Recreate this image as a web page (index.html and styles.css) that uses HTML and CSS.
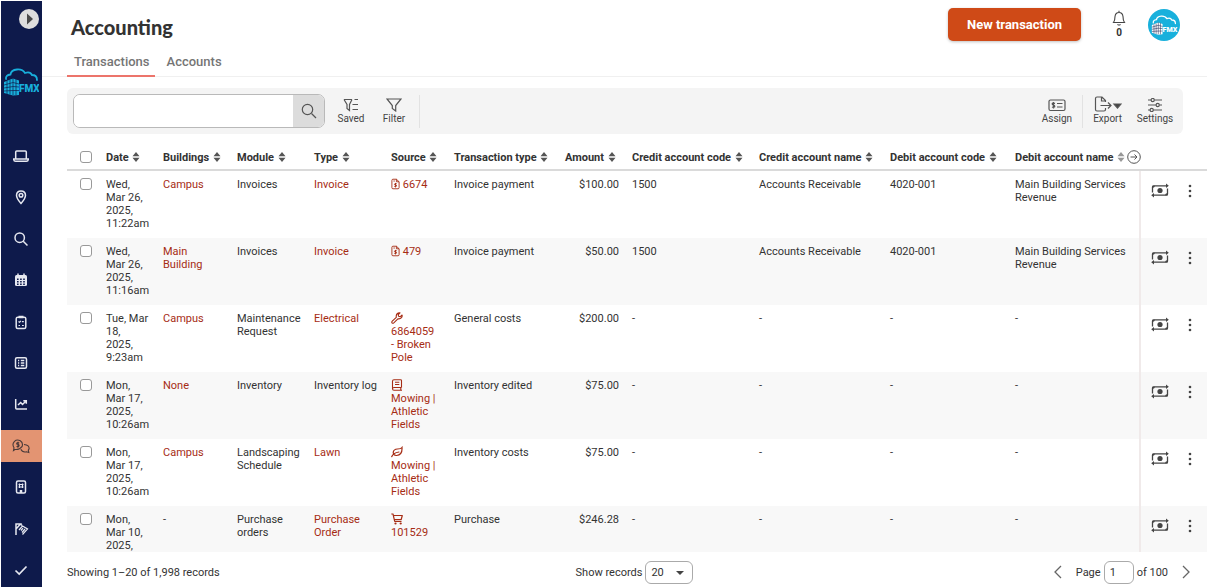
FILE: index.html
```
<!DOCTYPE html>
<html lang="en">
  <head>
    <meta charset="UTF-8" />
    <meta name="viewport" content="width=device-width, initial-scale=1.0" />
    <title>Accounting</title>
    <link rel="stylesheet" href="styles.css">
  </head>
  <body>
    <svg class="sprite" aria-hidden="true">
      <symbol id="logo" viewBox="0 0 36 28">
        <path d="M3 11 Q2.500 7 7.500 6.500 Q8 2 14 1.500 Q19.500 1 22 5 Q27 3 29 7 Q34 7 34 12" fill="none" stroke="currentColor" stroke-width="1.800" stroke-linecap="round" />
        <path d="M1 14 L10 10.500 L16 12.500 V27 L10 27.500 L1 25 Z" fill="currentColor" />
        <path class="logo-gap" d="M1 17 L10 14.500 L16 16 M1 20 L10 18.500 L16 19 M1 23 L10 22.500 H16 M4 13 V26 M7 12 V26.500 M10 10 V27 M13 11 V27" fill="none" stroke-width="0.700" />
      </symbol>
      <symbol id="sort" viewBox="0 0 8 10">
        <path d="M4 0 L7.500 4.200 H0.500 Z M4 10 L7.500 5.800 H0.500 Z" fill="currentColor" />
      </symbol>
      <symbol id="invoice" viewBox="0 0 10 12">
        <path d="M1 2 Q1 0.700 2.200 0.700 H6 L9 3.500 V10 Q9 11.300 7.800 11.300 H2.200 Q1 11.300 1 10 Z M6 0.700 V3.500 H9 M6.400 5.700 Q3.600 5 3.800 6.600 Q6.500 7 6.300 8.300 Q5.500 9.300 3.600 8.600 M5 4.800 V9.800 M2.700 2.700 H4.300" fill="none" stroke="currentColor" stroke-width="1" />
      </symbol>
      <symbol id="wrench" viewBox="0 0 12 12">
        <path d="M8.500 0.900 Q5.500 0.900 5.200 4 L5.300 5.300 L1 9.400 Q0.500 10.400 1.200 11 Q2 11.600 2.800 10.900 L6.900 6.800 Q9 7.300 10.500 5.700 Q11.400 4.500 11.100 3 L9.300 4.600 L7.500 4.300 L7.300 2.600 L9 0.900 Z" fill="none" stroke="currentColor" stroke-width="1.100" stroke-linejoin="round" />
      </symbol>
      <symbol id="book" viewBox="0 0 11 12">
        <path d="M10 8.500 V1.600 Q10 0.700 9 0.700 H2.500 Q1 0.700 1 2.300 V9.800 Q1 11.300 2.500 11.300 H10.500 M10 8.500 H2.500 Q1 8.500 1 9.900 M9.300 8.500 V11.300 M3.500 3.300 H7.800 M3.500 5.500 H7.800" fill="none" stroke="currentColor" stroke-width="1.100" />
      </symbol>
      <symbol id="leaf" viewBox="0 0 12 12">
        <path d="M11 1.500 Q10 3 6.500 3 Q2.500 3.200 2.200 6.500 Q2.500 9.700 5.600 9.500 Q11.500 9 11 1.500 Z M0.700 10.700 Q2 7 8 6" fill="none" stroke="currentColor" stroke-width="1.200" stroke-linecap="round" />
      </symbol>
      <symbol id="cart" viewBox="0 0 12 12">
        <path d="M0.300 1 H2 L3.700 8.300 H10.500 M2.400 2.500 H11.300 L10.200 6.500 H3.300" fill="none" stroke="currentColor" stroke-width="1.200" stroke-linejoin="round" />
        <circle cx="4.500" cy="10.500" r="1.100" fill="currentColor" />
        <circle cx="9.700" cy="10.500" r="1.100" fill="currentColor" />
      </symbol>
      <symbol id="money" viewBox="0 0 18 15">
        <path d="M1.500 9.500 V4 Q1.500 2.800 2.700 2.800 H15.500 M16.500 5.500 V11 Q16.500 12.200 15.300 12.200 H2.500" fill="none" stroke="currentColor" stroke-width="1.300" />
        <path d="M15 0.500 L17.800 2.800 L15 5.100 Z M3 9.900 L0.200 12.200 L3 14.500 Z" fill="currentColor" />
        <path d="M1.500 2.800 H4 Q3.800 4.800 1.500 5 Z M16.500 12.200 H14 Q14.200 10.200 16.500 10 Z" fill="currentColor" />
        <circle cx="9" cy="7.500" r="2.600" fill="currentColor" />
      </symbol>
      <symbol id="dots" viewBox="0 0 4 14">
        <circle cx="2" cy="2" r="1.300" /><circle cx="2" cy="7" r="1.300" /><circle cx="2" cy="12" r="1.300" />
      </symbol>
    </svg>

    <aside class="sidebar">
      <button class="expand" aria-label="Expand menu">
        <svg viewBox="0 0 20 20" width="20" height="20"><circle cx="10" cy="10" r="10" fill="#dedede" /><path d="M8 4.500 L14 10 L8 15.500 Z" fill="#4a4a4a" /></svg>
      </button>
      <a class="brand" href="#" aria-label="FMX home"><svg viewBox="0 0 36 28" width="36" height="28"><use href="#logo" /><text class="logo-text" x="16" y="24">FMX</text></svg></a>
      <nav class="menu">
        <a href="#" aria-label="Dashboard"><svg viewBox="0 0 16 16"><path d="M2.700 10.500 V4 Q2.700 3 3.700 3 H12.300 Q13.300 3 13.300 4 V10.500 M0.700 11 H15.300 Q15.300 13.300 13.500 13.300 H2.500 Q0.700 13.300 0.700 11 Z" /></svg></a>
        <a href="#" aria-label="Map"><svg viewBox="0 0 16 16"><path d="M8 14.500 Q3.500 9.500 3.500 6.300 Q3.700 2 8 2 Q12.300 2 12.500 6.300 Q12.500 9.500 8 14.500 Z" /><circle cx="8" cy="6.300" r="1.800" /></svg></a>
        <a href="#" aria-label="Search"><svg viewBox="0 0 16 16"><circle cx="6.700" cy="6.700" r="4.700" /><path d="M10.200 10.200 L14.500 14.500" /></svg></a>
        <a href="#" aria-label="Calendar"><svg viewBox="0 0 16 16"><path d="M2 4.500 Q2 3 3.500 3 H12.500 Q14 3 14 4.500 V12.500 Q14 14 12.500 14 H3.500 Q2 14 2 12.500 Z" fill="currentColor" stroke="none" /><path d="M5 1.500 V4 M11 1.500 V4" /><path class="cut" d="M4 7.300 H12 M4 9.800 H12 M4 12.200 H12" stroke-dasharray="1.600 1.500" /></svg></a>
        <a href="#" aria-label="Requests"><svg viewBox="0 0 16 16"><rect x="3.200" y="3.200" width="9.600" height="11.300" rx="1.500" /><path d="M5.500 3 H10.500" stroke-width="2.500" /><path d="M5.500 7.500 L6.500 8.300 L8 6.800 M9 7.700 H10.800 M5.500 11.500 H7 M9 11.500 H10.800" stroke-width="1.200" /></svg></a>
        <a href="#" aria-label="Lists"><svg viewBox="0 0 16 16"><rect x="2.500" y="2.700" width="11" height="10.600" rx="1.500" /><path d="M5 5.500 H6.200 M7.800 5.500 H11.300 M5 8 H6.200 M7.800 8 H11.300 M5 10.500 H6.200 M7.800 10.500 H11.300" /></svg></a>
        <a href="#" aria-label="Reports"><svg viewBox="0 0 16 16"><path d="M2.700 3 V12 Q2.700 13 3.700 13 H14 M5 9 L7.700 6.500 L9.500 8.500 L13 5 M10.300 4.700 H13.300 V7.700" /></svg></a>
        <a class="active" href="#" aria-label="Accounting"><svg class="wide" viewBox="0 0 18 16"><path d="M3 11.500 L1.500 12.500 L2 9.800 Q-0.300 6 2.500 3.300 Q5 1 8.300 2.800 Q11.500 5 10 8.700 Q7.500 12 3 11.500 Z M12 6.500 Q17.700 7 17 11 L16.300 12.200 L16.800 14.500 L14.500 13.800 Q10.500 14.800 8.800 11.300 M7.300 5 Q4.500 4 4.700 6 Q7.500 6.500 7 8 Q6.500 9 4.500 8.500 M6 3.700 V9.800" /></svg></a>
        <a href="#" aria-label="Buildings"><svg viewBox="0 0 16 16"><rect x="3.500" y="2" width="9" height="12" rx="1.500" /><path d="M6.500 4.500 V9 M9.500 4.500 V9 M5.500 5.500 H10.500 M5.500 8 H10.500" stroke-width="1.200" /><path d="M8 11 V14" stroke-width="2.500" /></svg></a>
        <a href="#" aria-label="Planning"><svg viewBox="0 0 16 16"><path d="M3 14 V3 H7.500 L3 8 M7.500 3 L9 4.500" /><path d="M6 9 L9.500 5 L14.500 8 L9.500 13.500 M8 9.500 L10 7.200 M9 11.500 L12 8" stroke-width="1.200" /></svg></a>
        <a href="#" aria-label="Tasks"><svg viewBox="0 0 16 16"><path d="M2.500 8.500 L6.200 12 L13.500 4.500" stroke-width="1.700" /></svg></a>
      </nav>
    </aside>

    <main class="main">
      <header class="header">
        <h1>Accounting</h1>
        <button class="new-button">New transaction</button>
        <button class="alerts" aria-label="Notifications">
          <svg viewBox="0 0 14 16" width="14" height="16"><path d="M1.500 12.500 Q3 10.500 3 6.500 Q3.500 2.500 7 2.500 Q10.500 2.500 11 6.500 Q11 10.500 12.500 12.500 Z M7 2.500 V0.700 M5.500 14.300 Q7 15.700 8.500 14.300" fill="none" stroke="#444" stroke-width="1.100" /></svg>
          <span>0</span>
        </button>
        <a class="avatar" href="#" aria-label="Profile"><svg viewBox="0 0 36 28" width="26" height="20"><use href="#logo" /><text class="logo-text" x="16" y="24">FMX</text></svg></a>
      </header>

      <nav class="tabs">
        <a class="selected" href="#">Transactions</a>
        <a href="#">Accounts</a>
      </nav>

      <section class="toolbar">
        <form class="search">
          <input type="search" aria-label="Search transactions">
          <button type="button" aria-label="Search">
            <svg viewBox="0 0 16 16" width="16" height="16"><circle cx="6.500" cy="6.500" r="5.200" /><path d="M10.500 10.500 L15 15" /></svg>
          </button>
        </form>
        <button class="tool tool-saved">
          <svg viewBox="0 0 16 14" width="16" height="14"><path d="M1 1.500 H9 M1 1.500 L4 6.500 V10.500 L6.500 12.500 V6.500 L9 1.500 M11.500 1.500 H15 M9.500 6.500 H15 M9.500 11.500 H15" /></svg>
          Saved
        </button>
        <button class="tool tool-filter">
          <svg viewBox="0 0 16 14" width="16" height="14"><path d="M1 1 H15 L9.700 7.500 V13 L6.300 10.500 V7.500 Z" /></svg>
          Filter
        </button>
        <span class="divider"></span>
        <div class="tools-right">
          <button class="tool">
            <svg viewBox="0 0 18 14" width="18" height="14"><rect x="1" y="2" width="16" height="10.500" rx="1.500" /><path d="M7 5.300 Q4 4.600 4.200 6 Q4.500 7 5.600 7.200 Q7 7.500 6.700 8.800 Q5.500 9.700 4 9 M5.500 4 V10.500 M9 5.500 H14.500 M9 9 H14.500" /></svg>
            Assign
          </button>
          <span class="divider"></span>
          <button class="tool">
            <svg viewBox="0 0 28 16" width="28" height="16"><path d="M11.500 6 V4.500 L8 1 H3 Q1.500 1 1.500 2.500 V13.500 Q1.500 15 3 15 H10 Q11.500 15 11.500 13.500 V12 M7.500 1 V5 H11.500 M6.500 9.500 H16.500 M14 6.500 L17 9.500 L14 12.500" /><path d="M20 8 H27 L23.500 12 Z" fill="#444" /></svg>
            Export
          </button>
          <button class="tool">
            <svg viewBox="0 0 16 14" width="16" height="14"><path d="M1 2 H4 M7.500 2 H15 M1 7 H9 M12.500 7 H15 M1 12 H3 M6.500 12 H15" /><circle cx="5.700" cy="2" r="1.600" /><circle cx="10.700" cy="7" r="1.600" /><circle cx="4.700" cy="12" r="1.600" /></svg>
            Settings
          </button>
        </div>
      </section>

      <div class="table-wrap">
        <table>
          <colgroup>
            <col class="c-check"><col class="c-date"><col class="c-building"><col class="c-module"><col class="c-type"><col class="c-source"><col class="c-kind"><col class="c-amount"><col class="c-credit-code"><col class="c-credit-name"><col class="c-debit-code"><col class="c-debit-name"><col class="c-actions">
          </colgroup>
          <thead>
            <tr>
              <th class="check"><input type="checkbox" aria-label="Select all"></th>
              <th>Date <svg class="sort"><use href="#sort" /></svg></th>
              <th>Buildings <svg class="sort"><use href="#sort" /></svg></th>
              <th>Module <svg class="sort"><use href="#sort" /></svg></th>
              <th>Type <svg class="sort"><use href="#sort" /></svg></th>
              <th>Source <svg class="sort"><use href="#sort" /></svg></th>
              <th>Transaction type <svg class="sort"><use href="#sort" /></svg></th>
              <th>Amount <svg class="sort"><use href="#sort" /></svg></th>
              <th>Credit account code <svg class="sort"><use href="#sort" /></svg></th>
              <th>Credit account name <svg class="sort"><use href="#sort" /></svg></th>
              <th>Debit account code <svg class="sort"><use href="#sort" /></svg></th>
              <th>Debit account name <svg class="sort faded"><use href="#sort" /></svg></th>
              <th class="scroll-cell"><button class="scroll-right" aria-label="Scroll right"><svg viewBox="0 0 14 14" width="14" height="14"><circle cx="7" cy="7" r="6.300" /><path d="M3.500 7 H10 M7.500 4.500 L10 7 L7.500 9.500" /></svg></button></th>
            </tr>
          </thead>
          <tbody>
            <tr>
              <td class="check"><input type="checkbox" aria-label="Select row"></td>
              <td>Wed, Mar 26, 2025, 11:22am</td>
              <td><a href="#">Campus</a></td>
              <td>Invoices</td>
              <td><a href="#">Invoice</a></td>
              <td><a href="#"><svg class="icon slim"><use href="#invoice" /></svg> 6674</a></td>
              <td>Invoice payment</td>
              <td class="amount">$100.00</td>
              <td>1500</td>
              <td>Accounts Receivable</td>
              <td>4020-001</td>
              <td>Main Building Services Revenue</td>
              <td class="actions"><div><button aria-label="Transfer"><svg width="18" height="15"><use href="#money" /></svg></button><button aria-label="More"><svg width="4" height="14"><use href="#dots" /></svg></button></div></td>
            </tr>
            <tr>
              <td class="check"><input type="checkbox" aria-label="Select row"></td>
              <td>Wed, Mar 26, 2025, 11:16am</td>
              <td><a href="#">Main Building</a></td>
              <td>Invoices</td>
              <td><a href="#">Invoice</a></td>
              <td><a href="#"><svg class="icon slim"><use href="#invoice" /></svg> 479</a></td>
              <td>Invoice payment</td>
              <td class="amount">$50.00</td>
              <td>1500</td>
              <td>Accounts Receivable</td>
              <td>4020-001</td>
              <td>Main Building Services Revenue</td>
              <td class="actions"><div><button aria-label="Transfer"><svg width="18" height="15"><use href="#money" /></svg></button><button aria-label="More"><svg width="4" height="14"><use href="#dots" /></svg></button></div></td>
            </tr>
            <tr>
              <td class="check"><input type="checkbox" aria-label="Select row"></td>
              <td>Tue, Mar 18,<br>2025, 9:23am</td>
              <td><a href="#">Campus</a></td>
              <td>Maintenance Request</td>
              <td><a href="#">Electrical</a></td>
              <td><a href="#"><svg class="icon"><use href="#wrench" /></svg><br>6864059<br>- Broken Pole</a></td>
              <td>General costs</td>
              <td class="amount">$200.00</td>
              <td>-</td>
              <td>-</td>
              <td>-</td>
              <td>-</td>
              <td class="actions"><div><button aria-label="Transfer"><svg width="18" height="15"><use href="#money" /></svg></button><button aria-label="More"><svg width="4" height="14"><use href="#dots" /></svg></button></div></td>
            </tr>
            <tr>
              <td class="check"><input type="checkbox" aria-label="Select row"></td>
              <td>Mon, Mar&nbsp;17, 2025, 10:26am</td>
              <td><a href="#">None</a></td>
              <td>Inventory</td>
              <td>Inventory log</td>
              <td><a href="#"><svg class="icon"><use href="#book" /></svg><br>Mowing | Athletic Fields</a></td>
              <td>Inventory edited</td>
              <td class="amount">$75.00</td>
              <td>-</td>
              <td>-</td>
              <td>-</td>
              <td>-</td>
              <td class="actions"><div><button aria-label="Transfer"><svg width="18" height="15"><use href="#money" /></svg></button><button aria-label="More"><svg width="4" height="14"><use href="#dots" /></svg></button></div></td>
            </tr>
            <tr>
              <td class="check"><input type="checkbox" aria-label="Select row"></td>
              <td>Mon, Mar&nbsp;17, 2025, 10:26am</td>
              <td><a href="#">Campus</a></td>
              <td>Landscaping Schedule</td>
              <td><a href="#">Lawn</a></td>
              <td><a href="#"><svg class="icon"><use href="#leaf" /></svg><br>Mowing | Athletic Fields</a></td>
              <td>Inventory costs</td>
              <td class="amount">$75.00</td>
              <td>-</td>
              <td>-</td>
              <td>-</td>
              <td>-</td>
              <td class="actions"><div><button aria-label="Transfer"><svg width="18" height="15"><use href="#money" /></svg></button><button aria-label="More"><svg width="4" height="14"><use href="#dots" /></svg></button></div></td>
            </tr>
            <tr>
              <td class="check"><input type="checkbox" aria-label="Select row"></td>
              <td>Mon, Mar&nbsp;10, 2025,</td>
              <td>-</td>
              <td>Purchase orders</td>
              <td><a href="#">Purchase Order</a></td>
              <td><a href="#"><svg class="icon"><use href="#cart" /></svg><br>101529</a></td>
              <td>Purchase</td>
              <td class="amount">$246.28</td>
              <td>-</td>
              <td>-</td>
              <td>-</td>
              <td>-</td>
              <td class="actions"><div><button aria-label="Transfer"><svg width="18" height="15"><use href="#money" /></svg></button><button aria-label="More"><svg width="4" height="14"><use href="#dots" /></svg></button></div></td>
            </tr>
          </tbody>
        </table>
      </div>

      <footer class="footer">
        <p>Showing 1–20 of 1,998 records</p>
        <div class="page-size">
          <label for="size">Show records</label>
          <span class="select">
            <select id="size"><option>20</option><option>50</option><option>100</option></select>
          </span>
        </div>
        <div class="pager">
          <button aria-label="Previous page"><svg viewBox="0 0 8 14" width="8" height="14"><path d="M7 1 L1 7 L7 13" /></svg></button>
          <label for="page">Page</label>
          <input id="page" type="text" value="1">
          <span>of 100</span>
          <button class="next" aria-label="Next page"><svg viewBox="0 0 8 14" width="8" height="14"><path d="M1 1 L7 7 L1 13" /></svg></button>
        </div>
      </footer>
    </main>
  </body>
</html>
```

FILE: styles.css
```
* {
  margin: 0;
  padding: 0;
  box-sizing: border-box;
}

body {
  display: flex;
  height: 100vh;
  padding: 1px 1px 0 1px;
  overflow: hidden;
  background: #fff;
  color: #333;
  font-family: Roboto, sans-serif;
  font-size: 11px;
  line-height: 13px;
}

button {
  border: none;
  background: none;
  color: inherit;
  font: inherit;
  cursor: pointer;
}

a {
  color: #a62c14;
  text-decoration: none;
}

svg {
  display: block;
}

.sprite {
  position: absolute;
  width: 0;
  height: 0;
}

/* sidebar */
.sidebar {
  display: flex;
  flex-direction: column;
  flex: none;
  width: 41px;
  background: #0e1a4b;
}

.expand {
  align-self: flex-end;
  margin: 8px 3px 0 0;
}

.brand {
  margin: 39px 0 44px 2px;
  color: #18aedb;
}

.logo-gap {
  stroke: #0e1a4b;
}

.logo-text {
  fill: currentColor;
  font-size: 10px;
  font-weight: 900;
}

.menu {
  display: flex;
  flex: 1;
  flex-direction: column;
  justify-content: space-between;
  padding-bottom: 1px;
}

.menu a {
  display: flex;
  align-items: center;
  justify-content: center;
  height: 32px;
  padding-right: 2px;
  color: #e6e8f0;
}

.menu svg {
  width: 16px;
  height: 16px;
  fill: none;
  stroke: currentColor;
  stroke-width: 1.5;
}

.menu .cut {
  stroke: #0e1a4b;
}

.menu .active {
  background: #e39472;
  color: #4a3a3a;
}

.menu .wide {
  width: 18px;
  stroke-width: 1.1;
}

/* header */
.main {
  display: flex;
  flex: 1;
  flex-direction: column;
  min-width: 0;
}

.header {
  display: flex;
  align-items: center;
  height: 47px;
  padding: 0 27px 0 29px;
}

h1 {
  flex: 1;
  padding-top: 4px;
  color: #333;
  font-family: Lato, sans-serif;
  font-size: 20px;
  font-weight: 900;
  line-height: 24px;
}

.new-button {
  width: 133px;
  height: 33px;
  border-radius: 5px;
  background: #cf4a17;
  box-shadow: 0 1px 3px rgba(0, 0, 0, 0.25);
  color: #fff;
  font-size: 13px;
  font-weight: 700;
}

.alerts {
  display: flex;
  flex-direction: column;
  align-items: center;
  width: 14px;
  margin: 0 22px 0 31px;
  font-size: 10px;
  font-weight: 700;
}

.avatar {
  display: flex;
  align-items: center;
  justify-content: center;
  width: 32px;
  height: 32px;
  border-radius: 50%;
  background: #18b0dc;
  color: #fff;
}

.avatar svg {
  overflow: visible;
}

/* tabs */
.tabs {
  display: flex;
  height: 29px;
  padding-left: 25px;
  border-bottom: 1px solid #f0f0f0;
}

.tabs a {
  height: 29px;
  padding: 7px 5px 0 7px;
  color: #757575;
  font-size: 13px;
  font-weight: 500;
}

.tabs .selected {
  margin-right: 5px;
  border-bottom: 2px solid #ec746b;
}

/* toolbar */
.toolbar {
  display: flex;
  align-items: center;
  height: 46px;
  margin: 11px 24px 11px 25px;
  padding: 0 5px 0 6px;
  border-radius: 6px;
  background: #f4f4f4;
}

.search {
  display: flex;
  width: 252px;
  height: 34px;
  overflow: hidden;
  border: 1px solid #b9b9b9;
  border-radius: 7px;
  background: #fff;
}

.search input {
  flex: 1;
  min-width: 0;
  padding: 0 8px;
  border: none;
  outline: none;
  font: inherit;
}

.search button {
  display: flex;
  align-items: center;
  justify-content: center;
  width: 31px;
  background: #dcdcdc;
}

.search svg,
.tool svg {
  fill: none;
  stroke: #555;
  stroke-width: 1.2;
}

.tool {
  display: flex;
  flex-direction: column;
  align-items: center;
  justify-content: flex-end;
  height: 30px;
  color: #444;
  font-size: 10px;
  line-height: 14px;
}

.tool-saved {
  width: 28px;
  margin-left: 12px;
}

.tool-filter {
  width: 28px;
  margin: 0 11px 0 15px;
}

.divider {
  width: 1px;
  height: 33px;
  background: #e2e2e2;
}

.tools-right {
  display: flex;
  align-items: center;
  gap: 10px;
  margin-left: auto;
}

.tools-right .tool:last-child {
  width: 46px;
}

/* table */
.table-wrap {
  flex: 1;
  min-height: 0;
  margin-left: 25px;
  overflow: auto;
  scrollbar-width: none;
}

table {
  width: 100%;
  border-collapse: separate;
  border-spacing: 0;
  table-layout: fixed;
}

.c-check { width: 33px; }
.c-date { width: 57px; }
.c-building { width: 74px; }
.c-module { width: 77px; }
.c-type { width: 77px; }
.c-source { width: 63px; }
.c-kind { width: 111px; }
.c-amount { width: 67px; }
.c-credit-code { width: 127px; }
.c-credit-name { width: 131px; }
.c-debit-code { width: 125px; }
.c-debit-name { width: 130px; }
.c-actions { width: 68px; }

th {
  position: sticky;
  top: 0;
  height: 26px;
  padding: 0 0 0 6px;
  border-bottom: 2px solid #dadada;
  background: #fff;
  font-size: 11px;
  font-weight: 700;
  text-align: left;
  white-space: nowrap;
}

td {
  height: 67px;
  padding: 7px 6px 8px;
  vertical-align: top;
}

tbody tr:nth-child(even) td {
  background: #f8f8f8;
}

.check {
  padding-left: 13px;
}

.check input {
  display: block;
  width: 12px;
  height: 12px;
  border: 1px solid #999;
  border-radius: 3px;
  background: #fff;
  appearance: none;
}

.sort {
  display: inline-block;
  width: 8px;
  height: 10px;
  margin-left: 1px;
  color: #555;
  vertical-align: -1px;
}

.faded {
  opacity: 0.6;
}

.icon {
  display: inline-block;
  width: 12px;
  height: 12px;
  vertical-align: -2px;
}

.slim {
  width: 9px;
}

.amount {
  padding-right: 7px;
  text-align: right;
}

th.scroll-cell {
  z-index: 1;
  padding: 0;
}

.scroll-right {
  position: absolute;
  top: 5px;
  left: -12px;
}

.scroll-right svg {
  fill: none;
  stroke: #555;
  stroke-width: 1;
}

.actions {
  border-left: 2px solid #f0eaea;
}

.actions div {
  display: flex;
  align-items: center;
  justify-content: space-between;
  padding: 5px 9px 0 4px;
}

.actions svg {
  color: #444;
  fill: #444;
}

/* footer */
.footer {
  display: grid;
  grid-template-columns: 1fr auto 1fr;
  align-items: center;
  height: 35px;
  padding: 5px 17px 0 25px;
}

.page-size,
.pager {
  display: flex;
  align-items: center;
  gap: 3px;
}

.page-size {
  padding-left: 12px;
}

.pager {
  justify-content: flex-end;
}

.select {
  position: relative;
}

.select::after {
  position: absolute;
  top: 10px;
  right: 9px;
  border: 4px solid transparent;
  border-top-color: #444;
  content: "";
  pointer-events: none;
}

.footer select,
.footer input {
  height: 23px;
  border: 1px solid #aaa;
  border-radius: 6px;
  background: #fff;
  color: #333;
  font: inherit;
  appearance: none;
}

.footer select {
  display: block;
  width: 48px;
  padding: 0 5px;
}

.footer input {
  width: 30px;
  padding: 0 5px;
}

.pager svg {
  fill: none;
  stroke: #666;
  stroke-width: 1.3;
}

.pager label {
  margin-left: 11px;
}

.pager .next {
  margin-left: 11px;
}
```
